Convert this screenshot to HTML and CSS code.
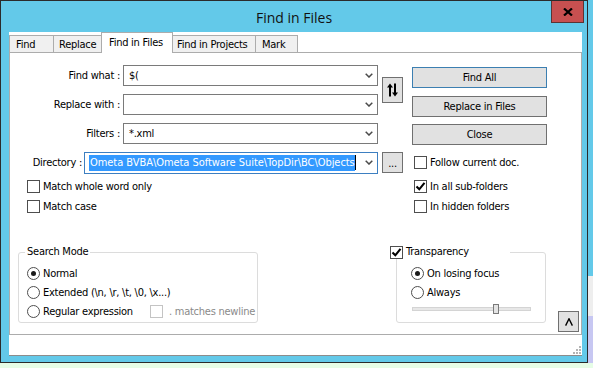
FILE: index.html
```html
<!DOCTYPE html>
<html>
<head>
<meta charset="utf-8">
<title>Find in Files</title>
<link rel="stylesheet" href="styles.css">
</head>
<body>
<div class="window">
  <div class="titlebar">
    <div class="title">Find in Files</div>
    <div class="close">
      <svg width="10" height="8" viewBox="0 0 10 8"><path d="M1 0.5 L9 7.5 M9 0.5 L1 7.5" stroke="#000" stroke-width="2.2" fill="none"/></svg>
    </div>
  </div>
  <div class="client">
    <div class="tabs">
      <div class="tab w-find">Find</div>
      <div class="tab w-replace">Replace</div>
      <div class="tab active w-fif">Find in Files</div>
      <div class="tab w-fip">Find in Projects</div>
      <div class="tab w-mark">Mark</div>
    </div>
    <div class="panel">
      <div class="form">
        <div class="field r1">
          <span class="lbl">Find what :</span>
          <div class="combo"><span class="ctext">$(</span><svg class="arrow" width="8" height="5" viewBox="0 0 8 5"><path d="M0.7 0.7 L4 4 L7.3 0.7" stroke="#4a4a4a" stroke-width="1.5" fill="none"/></svg></div>
        </div>
        <div class="field r2">
          <span class="lbl">Replace with :</span>
          <div class="combo"><span class="ctext"></span><svg class="arrow" width="8" height="5" viewBox="0 0 8 5"><path d="M0.7 0.7 L4 4 L7.3 0.7" stroke="#4a4a4a" stroke-width="1.5" fill="none"/></svg></div>
        </div>
        <div class="field r3">
          <span class="lbl">Filters :</span>
          <div class="combo"><span class="ctext">*.xml</span><svg class="arrow" width="8" height="5" viewBox="0 0 8 5"><path d="M0.7 0.7 L4 4 L7.3 0.7" stroke="#4a4a4a" stroke-width="1.5" fill="none"/></svg></div>
        </div>
        <div class="field r4">
          <span class="lbl lbl-dir">Directory :</span>
          <div class="combo combo-dir focused"><div class="clip"><span class="sel">Ometa BVBA\Ometa Software Suite\TopDir\BC\Objects</span><span class="caret"></span></div><svg class="arrow" width="8" height="5" viewBox="0 0 8 5"><path d="M0.7 0.7 L4 4 L7.3 0.7" stroke="#4a4a4a" stroke-width="1.5" fill="none"/></svg></div>
        </div>
        <div class="btn swap">
          <svg width="11" height="14" viewBox="0 0 11 14"><path d="M3 13.5 V3" stroke="#000" stroke-width="2" fill="none"/><path d="M0 4.5 L3 0.5 L6 4.5 Z" fill="#000"/><path d="M8 0.5 V11" stroke="#000" stroke-width="2" fill="none"/><path d="M5 9.5 L8 13.5 L11 9.5 Z" fill="#000"/></svg>
        </div>
        <div class="btn dots">...</div>
        <div class="btn act b1 default">Find All</div>
        <div class="btn act b2">Replace in Files</div>
        <div class="btn act b3">Close</div>
        <label class="chk follow"><span class="box"></span><span>Follow current doc.</span></label>
      </div>
      <div class="checks">
        <label class="chk left c1"><span class="box"></span><span>Match whole word only</span></label>
        <label class="chk left c2"><span class="box"></span><span>Match case</span></label>
        <label class="chk right c1"><span class="box on"><svg width="11" height="11" viewBox="0 0 11 11"><path d="M1.5 5.5 L4.3 8.3 L9.5 1.8" stroke="#000" stroke-width="2.1" fill="none"/></svg></span><span>In all sub-folders</span></label>
        <label class="chk right c2"><span class="box"></span><span>In hidden folders</span></label>
      </div>
      <div class="bottom">
        <fieldset class="group mode">
          <legend class="leg-mode">Search Mode</legend>
          <div class="radio"><span class="circ on"></span><span>Normal</span></div>
          <div class="radio"><span class="circ"></span><span>Extended (\n, \r, \t, \0, \x...)</span></div>
          <div class="radio"><span class="circ"></span><span class="rx-label">Regular expression</span><span class="box dis"></span><span class="dis-text">. matches newline</span></div>
        </fieldset>
        <fieldset class="group transp">
          <legend class="leg-transp"><span class="box on"><svg width="11" height="11" viewBox="0 0 11 11"><path d="M1.5 5.5 L4.3 8.3 L9.5 1.8" stroke="#000" stroke-width="2.1" fill="none"/></svg></span><span>Transparency</span></legend>
          <div class="radio"><span class="circ on"></span><span>On losing focus</span></div>
          <div class="radio"><span class="circ"></span><span>Always</span></div>
          <div class="track"><span class="thumb"></span></div>
        </fieldset>
        <div class="btn up">
          <svg width="8" height="8" viewBox="0 0 8 8"><path d="M0.6 7.6 L4 0.8 L7.4 7.6" stroke="#000" stroke-width="1.4" fill="none"/></svg>
        </div>
      </div>
    </div>
    <div class="status">
      <svg width="9" height="9" viewBox="0 0 9 9"><g fill="#b4b4b4"><rect x="7" y="1" width="2" height="2"/><rect x="4" y="4" width="2" height="2"/><rect x="7" y="4" width="2" height="2"/><rect x="1" y="7" width="2" height="2"/><rect x="4" y="7" width="2" height="2"/><rect x="7" y="7" width="2" height="2"/></g></svg>
    </div>
  </div>
</div>
<div class="edge">
  <div class="edge-a"></div>
  <div class="edge-b"></div>
  <div class="edge-c"></div>
</div>
</body>
</html>
```
FILE: styles.css
```css
* { box-sizing: border-box; }
html, body { margin: 0; padding: 0; }
body {
  width: 593px;
  height: 368px;
  overflow: hidden;
  background: #e6fde6;
  display: flex;
  align-items: flex-start;
  font-family: "DejaVu Sans Condensed", "DejaVu Sans", sans-serif;
  font-size: 11px;
  letter-spacing: -0.25px;
  color: #000;
}
.window {
  flex: none;
  width: 588px;
  height: 363px;
  border: 1px solid #2b2b2b;
  background: #63c9e9;
  display: flex;
  flex-direction: column;
}
.edge { flex: none; width: 5px; display: flex; flex-direction: column; }
.edge-a { height: 276px; background: #63c9e9; }
.edge-b { height: 40px; background: #eeeeee; }
.edge-c { height: 47px; background: #c7c7f2; }

.titlebar {
  flex: none;
  height: 31px;
  display: grid;
  grid-template-columns: 1fr auto 1fr;
  align-items: center;
}
.title {
  grid-column: 2;
  font-family: "Open Sans", "Noto Sans", sans-serif;
  font-size: 14px;
  letter-spacing: 0;
  color: #111;
  padding-top: 1px;
}
.close {
  grid-column: 3;
  justify-self: end;
  align-self: start;
  width: 33px;
  height: 22px;
  margin-right: 3px;
  background: #c75050;
  border: 1px solid #5b3434;
  border-top: none;
  display: flex;
  align-items: center;
  justify-content: center;
}

.client {
  flex: 1;
  margin: 0 5px 6px 8px;
  background: #fff;
  display: flex;
  flex-direction: column;
  border-bottom: 1px solid #8c8c8c;
}
.tabs {
  flex: none;
  height: 20px;
  display: flex;
  align-items: flex-end;
}
.tab {
  flex: none;
  height: 17px;
  margin-right: -1px;
  padding-left: 6px;
  border: 1px solid #acacac;
  border-bottom: none;
  background: #f0f0f0;
  display: flex;
  align-items: center;
  white-space: nowrap;
}
.tab.active {
  position: relative;
  z-index: 1;
  height: 21px;
  margin-bottom: -1px;
  background: #fff;
  padding-bottom: 2px;
  padding-left: 7px;
}
.w-find { width: 45px; }
.w-replace { width: 49px; padding-left: 5px; }
.w-fif { width: 72px; }
.w-fip { width: 84px; padding-left: 4px; }
.w-mark { width: 43px; }

.panel {
  flex: none;
  height: 283px;
  border: 1px solid #acacac;
  padding-top: 12px;
}
.form {
  display: grid;
  grid-template-columns: 368px 34px 135px;
  grid-template-rows: repeat(4, 21px);
  row-gap: 8px;
}
.field {
  grid-column: 1;
  display: flex;
  justify-content: flex-end;
  align-items: center;
}
.r1 { grid-row: 1; }
.r2 { grid-row: 2; }
.r3 { grid-row: 3; }
.r4 { grid-row: 4; }
.lbl { margin-right: 3px; white-space: nowrap; }
.lbl-dir { margin-right: 2px; }
.combo {
  width: 255px;
  height: 21px;
  border: 1px solid #7a7a7a;
  background: #fff;
  display: flex;
  align-items: center;
}
.combo-dir { width: 294px; height: 22px; }
.combo.focused { border-color: #3d7fc1; }
.ctext { flex: 1; padding-left: 5px; white-space: nowrap; }
.arrow { flex: none; margin: 0 4px 0 4px; }
.clip {
  flex: 1;
  margin-left: 4px;
  display: flex;
  align-items: center;
  height: 16px;
}
.sel {
  flex: none;
  padding-left: 1px;
  background: #3399ff;
  color: #fff;
  line-height: 16px;
  letter-spacing: -0.05px;
  white-space: nowrap;
}
.caret { flex: none; width: 1px; height: 15px; background: #000; }

.btn {
  border: 1px solid #707070;
  background: #e1e1e1;
  display: flex;
  align-items: center;
  justify-content: center;
  white-space: nowrap;
}
.btn.default { border-color: #3c7fb1; }
.swap {
  grid-column: 2;
  grid-row: 1 / 3;
  align-self: center;
  justify-self: start;
  margin: -1px 0 0 4px;
  width: 21px;
  height: 26px;
}
.dots {
  grid-column: 2;
  grid-row: 4;
  justify-self: start;
  margin-left: 4px;
  width: 21px;
  height: 21px;
  align-items: flex-end;
  padding-bottom: 3px;
  line-height: 1;
}
.act { grid-column: 3; width: 135px; height: 21px; align-self: start; margin-top: 2px; }
.b1 { grid-row: 1; }
.b2 { grid-row: 2; }
.b3 { grid-row: 3; margin-top: 1px; }
.follow { grid-column: 3; grid-row: 4; margin-left: 2px; }

.chk { display: flex; align-items: center; gap: 3px; white-space: nowrap; }
.box {
  flex: none;
  width: 13px;
  height: 13px;
  border: 1px solid #4e4e4e;
  background: #fff;
  display: flex;
  align-items: center;
  justify-content: center;
}
.box.dis { border-color: #c4c4c4; }
.dis-text { color: #8a8a8a; margin-left: 3px; }

.checks {
  display: grid;
  grid-template-columns: 368px 34px 135px;
  grid-template-rows: 13px 13px;
  row-gap: 7px;
  margin-top: 7px;
}
.checks .c1 { grid-row: 1; }
.checks .c2 { grid-row: 2; }
.checks .left { grid-column: 1; padding-left: 17px; }
.checks .right { grid-column: 3; margin-left: 2px; }

.bottom {
  display: flex;
  align-items: flex-start;
  margin-top: 32px;
}
.group {
  margin: 0;
  min-width: 0;
  height: 78px;
  border: 1px solid #dcdcdc;
  border-radius: 3px;
}
.mode { width: 240px; margin-left: 8px; padding: 5px 0 0 8px; }
.transp { width: 150px; margin-left: 138px; padding: 5px 0 0 14px; }
legend {
  height: 14px;
  line-height: 14px;
  white-space: nowrap;
}
.leg-mode { padding: 0 2px; margin-left: -2px; }
.leg-transp {
  width: 120px;
  padding: 0;
  margin-left: -21px;
  display: flex;
  align-items: center;
  gap: 3px;
}
.radio {
  display: flex;
  align-items: center;
  gap: 3px;
  height: 19px;
  white-space: nowrap;
}
.circ {
  flex: none;
  width: 13px;
  height: 13px;
  border: 1px solid #4e4e4e;
  border-radius: 50%;
  background: #fff;
  display: flex;
  align-items: center;
  justify-content: center;
}
.circ.on::after {
  content: "";
  width: 5px;
  height: 5px;
  border-radius: 50%;
  background: #1a1a1a;
}
.rx-label { width: 104px; }
.track {
  margin: 5px 0 0 1px;
  width: 119px;
  height: 4px;
  border: 1px solid #d4d4d4;
  background: #e7e7e7;
  display: flex;
  align-items: center;
}
.thumb {
  flex: none;
  width: 6px;
  height: 10px;
  margin-left: 80px;
  border: 1px solid #7a7a7a;
  background: #e4e4e4;
}
.up {
  flex: none;
  width: 21px;
  height: 21px;
  margin: 66px 0 0 12px;
}

.status {
  flex: 1;
  display: flex;
  justify-content: flex-end;
  align-items: flex-end;
  padding: 0 1px 1px 0;
}
```
